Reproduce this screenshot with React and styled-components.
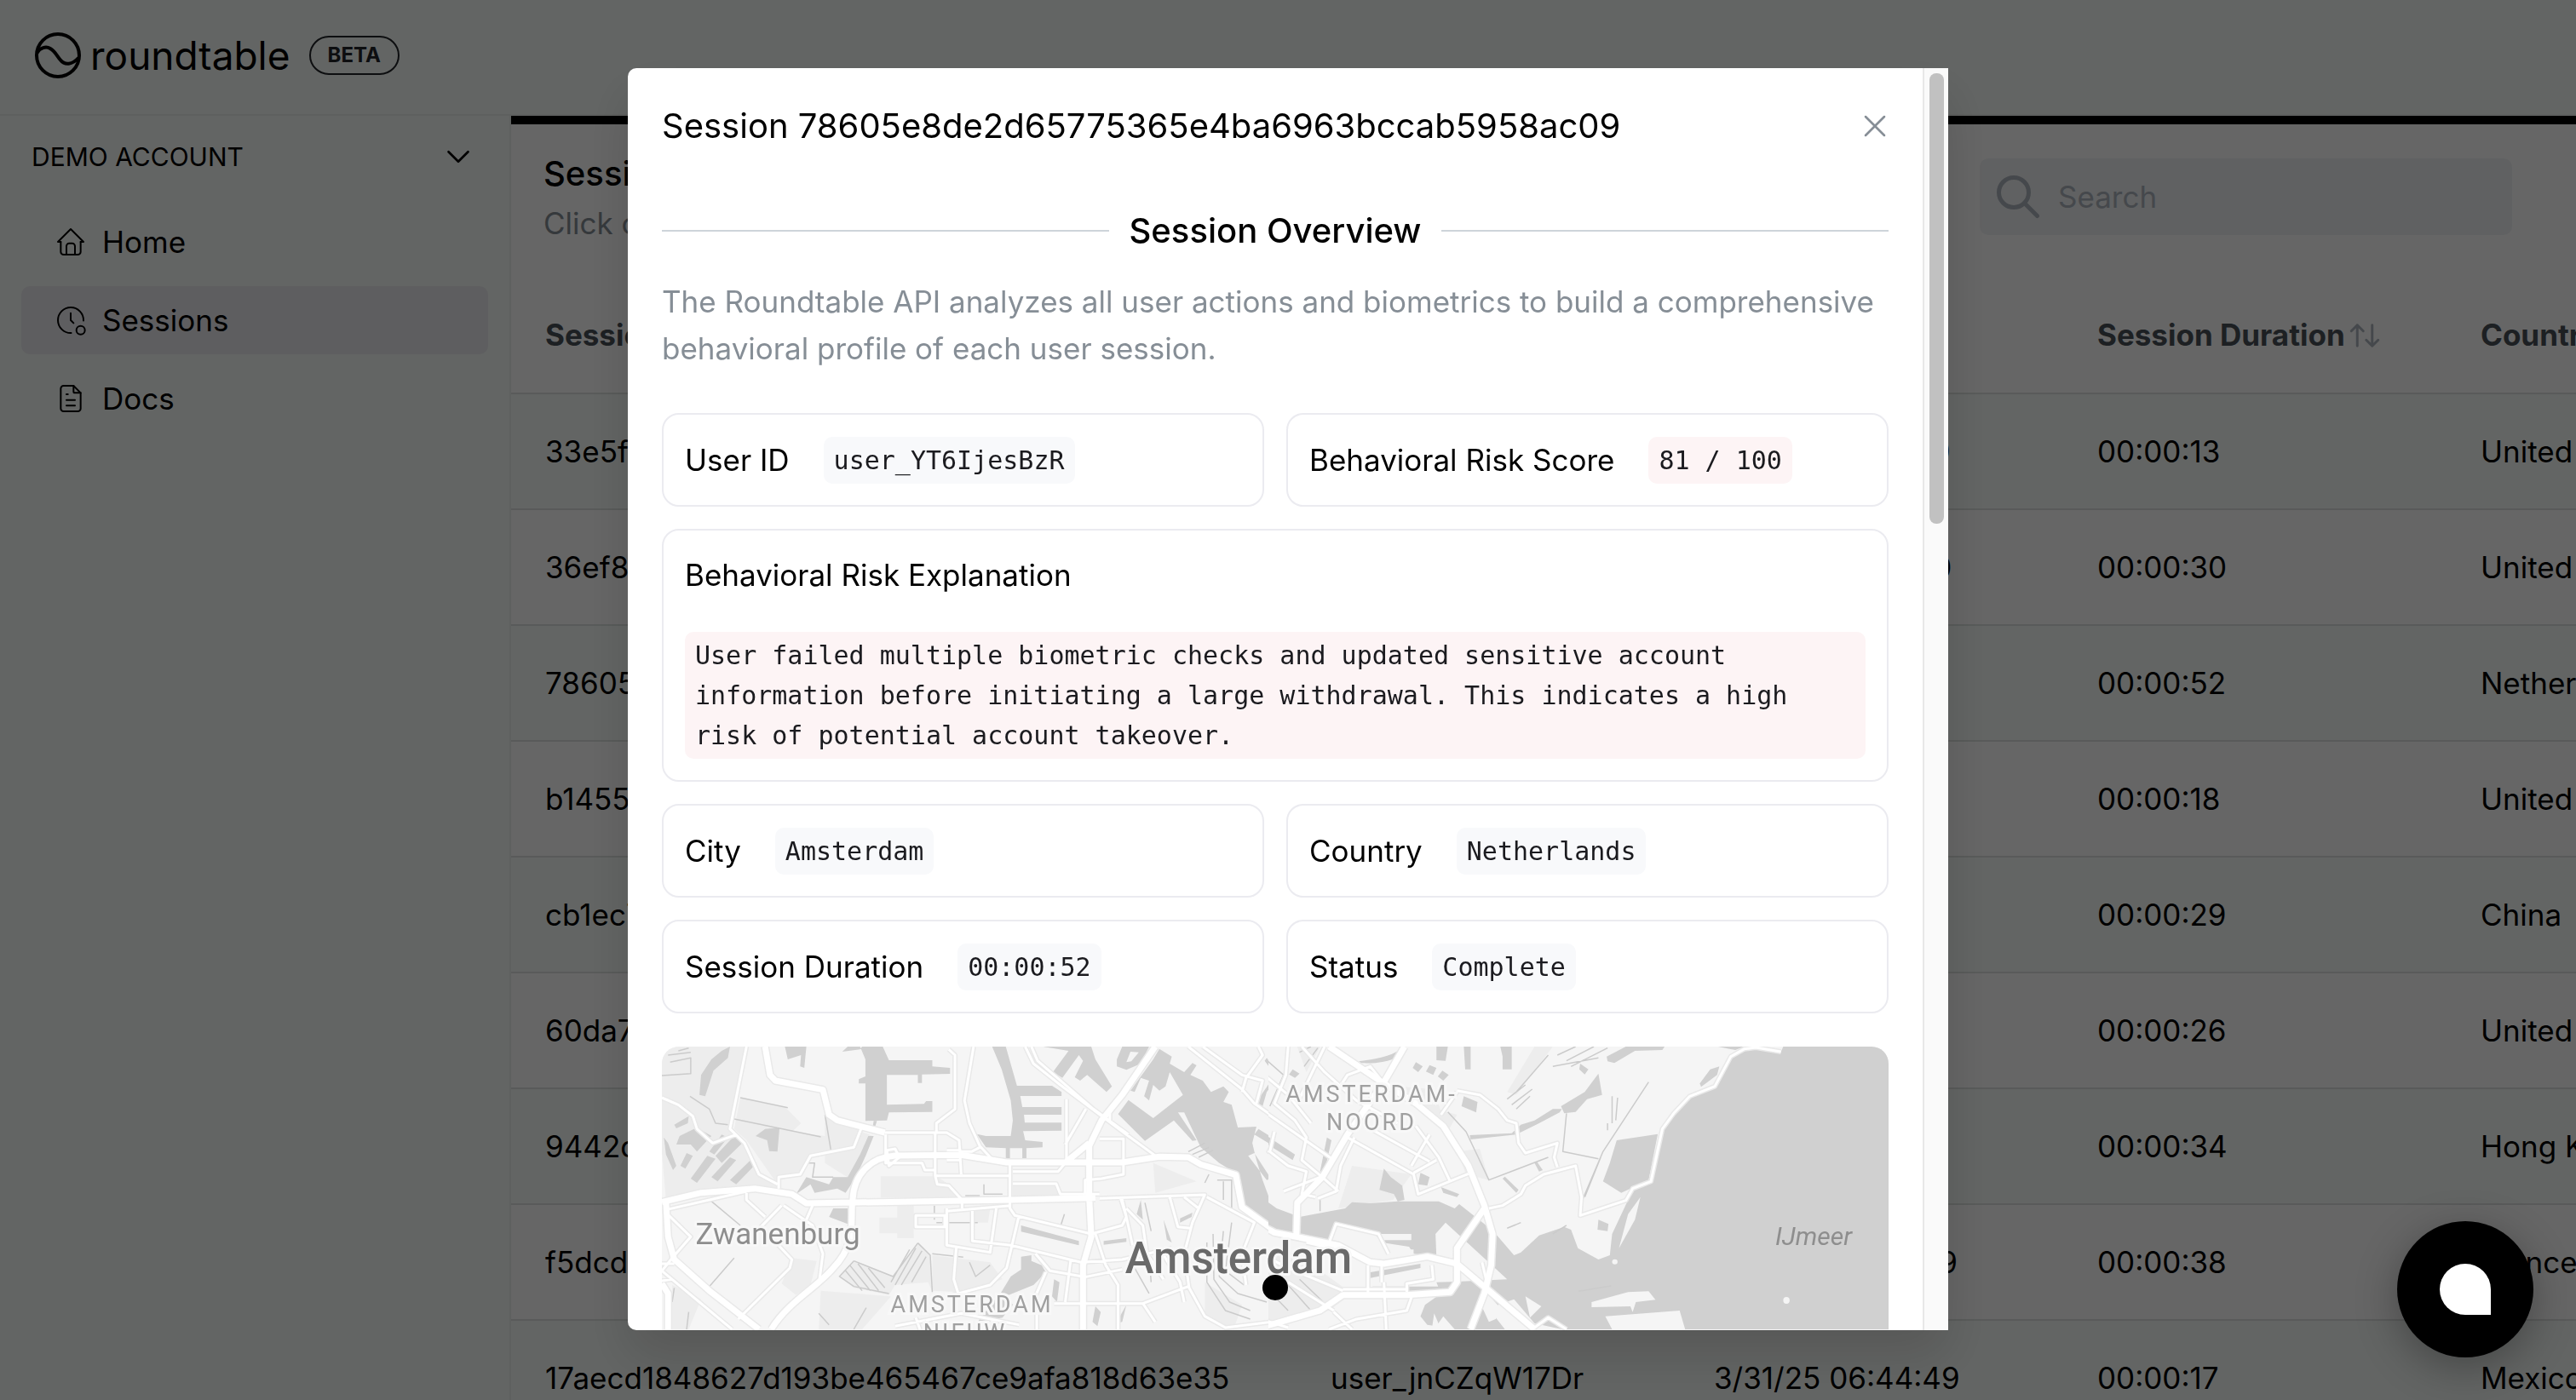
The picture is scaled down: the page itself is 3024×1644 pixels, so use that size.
import React from "react";
import styled, { createGlobalStyle, css } from "styled-components";
import {
  TbArrowsSort,
  TbChevronDown,
  TbClockRecord,
  TbFileText,
  TbHome,
  TbSearch,
  TbX,
} from "react-icons/tb";

const sessions = [
  ["33e5f0c7ab1d42e89c6bd0f7a35e21d94c8b70ae", "user_Qm4TzLwX8p", "3/31/25 06:51:59", "00:00:13", "United States"],
  ["36ef8a92d4c07b15e63f9a8b21dc470e5f96ab31", "user_b7RkVnE2Ys", "3/31/25 06:51:40", "00:00:30", "United Kingdom"],
  ["78605e8de2d65775365e4ba6963bccab5958ac09", "user_YT6IjesBzR", "3/31/25 06:51:11", "00:00:52", "Netherlands"],
  ["b1455c3e90fa7d26148be5c07f3a92d6e8140bc7", "user_h3WcPxU9Ld", "3/31/25 06:49:11", "00:00:18", "United States"],
  ["cb1ec7405d8ab396f21e70c4d95b83a6f07e2d14", "user_Kf5GmJtQ0a", "3/31/25 06:48:11", "00:00:29", "China"],
  ["60da7e1b4f93c82a5d06e7bc318f49a2d75c0be6", "user_r8NvSyH1Co", "3/31/25 06:47:11", "00:00:26", "United States"],
  ["9442d05bc7e81fa3692d4b0ce5a7f836d19b2e70", "user_Xw2DqZiM6u", "3/31/25 06:46:11", "00:00:34", "Hong Kong"],
  ["f5dcd8a16b03e97c42fd85ae70b1c6394e2da58f", "user_e9PbOgF4Tk", "3/31/25 06:45:29", "00:00:38", "France"],
  ["17aecd1848627d193be465467ce9afa818d63e35", "user_jnCZqW17Dr", "3/31/25 06:44:49", "00:00:17", "Mexico"],
];

const App = function () {
  return (
    <>
      <GlobalStyle />
      <Page>
        <TopBar>
          <Logo />
          <Wordmark>roundtable</Wordmark>
          <BetaBadge>BETA</BetaBadge>
        </TopBar>
        <Body>
          <Sidebar>
            <AccountButton type="button">
              DEMO ACCOUNT
              <TbChevronDown size={46} strokeWidth={1.4} />
            </AccountButton>
            <NavLink href="#home">
              <TbHome size={40} strokeWidth={1.2} />
              Home
            </NavLink>
            <NavLink href="#sessions" $active>
              <TbClockRecord size={40} strokeWidth={1.2} />
              Sessions
            </NavLink>
            <NavLink href="#docs">
              <TbFileText size={40} strokeWidth={1.2} />
              Docs
            </NavLink>
          </Sidebar>
          <Main>
            <MainHead>
              <div>
                <MainTitle>Sessions</MainTitle>
                <MainHint>Click on a session to see its details.</MainHint>
              </div>
              <SearchBox>
                <TbSearch size={60} />
                <SearchInput type="search" placeholder="Search" aria-label="Search" />
              </SearchBox>
            </MainHead>
            <SessionTable />
          </Main>
        </Body>
      </Page>
      <Overlay>
        <SessionModal />
      </Overlay>
      <ChatButton type="button" aria-label="Open chat">
        <ChatBubble />
      </ChatButton>
    </>
  );
};

export default App;

const SessionTable = function () {
  return (
    <TableWrapper>
      <Table>
        <colgroup>
          <Col $width={922} />
          <Col $width={450} />
          <Col $width={450} />
          <Col $width={450} />
          <Col $width={450} />
        </colgroup>
        <thead>
          <tr>
            <th>Session ID</th>
            <th>User ID</th>
            <th>Start Time</th>
            <th>
              <SortButton type="button">
                Session Duration
                <TbArrowsSort size={42} strokeWidth={1.7} />
              </SortButton>
            </th>
            <th>Country</th>
          </tr>
        </thead>
        <tbody>
          {sessions.map((row) => (
            <tr key={row[0]}>
              {row.map((cell) => (
                <td key={cell}>{cell}</td>
              ))}
            </tr>
          ))}
        </tbody>
      </Table>
    </TableWrapper>
  );
};

const SessionModal = function () {
  return (
    <Modal role="dialog" aria-modal="true" aria-labelledby="modal-title">
      <ModalContent>
        <ModalHeader>
          <ModalTitle id="modal-title">
            Session 78605e8de2d65775365e4ba6963bccab5958ac09
          </ModalTitle>
          <CloseButton type="button" aria-label="Close">
            <TbX size={44} strokeWidth={1.4} />
          </CloseButton>
        </ModalHeader>
        <SectionDivider>Session Overview</SectionDivider>
        <Intro>
          The Roundtable API analyzes all user actions and biometrics to build a
          comprehensive behavioral profile of each user session.
        </Intro>
        <CardGrid>
          <Field label="User ID" value="user_YT6IjesBzR" />
          <Field label="Behavioral Risk Score" value="81 / 100" risk />
          <WideCard>
            Behavioral Risk Explanation
            <Code $risk>
              User failed multiple biometric checks and updated sensitive
              account information before initiating a large withdrawal. This
              indicates a high risk of potential account takeover.
            </Code>
          </WideCard>
          <Field label="City" value="Amsterdam" />
          <Field label="Country" value="Netherlands" />
          <Field label="Session Duration" value="00:00:52" />
          <Field label="Status" value="Complete" />
        </CardGrid>
        <CityMap />
      </ModalContent>
      <ScrollTrack>
        <ScrollThumb />
      </ScrollTrack>
    </Modal>
  );
};

const Field = function ({ label, value, risk }) {
  return (
    <Card>
      {label}
      <Code $risk={risk}>{value}</Code>
    </Card>
  );
};

const Logo = function () {
  return (
    <svg width="56" height="56" viewBox="0 0 56 56" fill="none" stroke="#000" strokeWidth="4">
      <circle cx="28" cy="28" r="25" />
      <path d="M3.500 25C7 19 14 17 19 20C25 23.500 27 29 31 33.500C36 40 45 39 52 31" />
    </svg>
  );
};

const westWater = [
  "M515,30 570,30 585,78 690,78 690,100 733,105 733,126 665,128 665,158 655,158 655,130 580,130 580,235 670,232 675,222 690,222 690,260 585,262 580,290 528,292 528,160 512,160 512,145 528,135 528,75Z",
  "M548,292 556,292 552,310 546,310Z",
  "M333,30 385,30 380,105 370,100 372,60 340,75Z",
  "M472,48 485,30 520,30 515,40Z",
  "M835,30 868,30 895,168 980,168 1003,190 1003,204 903,204 908,243 1003,243 1003,270 912,270 914,298 1003,298 1003,326 910,328 915,360 957,366 957,385 918,388 918,425 908,425 908,388 878,388 878,425 868,425 868,388 820,385 798,338 820,345 880,345 885,290 880,220 858,110Z",
  "M958,30 1075,30 1085,75 1125,170 1112,190 1065,130 1048,150 1035,138 1055,80 1045,60 1005,140 982,120 1020,45Z",
  "M1150,30 1215,30 1195,90 1160,112 1137,100 1137,75ZM1170,48 1160,85 1172,82 1190,50Z",
  "M1240,38 1270,65 1265,90 1300,120 1320,88 1330,96 1315,130 1345,150 1365,190 1395,170 1408,190 1395,225 1415,235 1430,315 1475,312 1465,370 1475,430 1490,500 1515,600 1550,585 1568,600 1568,685 1520,675 1445,595 1430,480 1385,440 1340,385 1300,262 1285,262 1312,320 1330,360 1320,362 1275,290 1205,362 1140,268 1165,218 1225,282 1297,200 1265,120 1255,170 1240,185 1225,165 1215,220 1203,205 1215,150 1195,140 1180,190 1170,185 1225,75Z",
  "M100,275 65,305 70,318 98,300ZM120,315 78,345 70,375 105,375 120,400 155,345ZM180,340 150,400 162,410 195,350ZM210,345 165,415 180,440 230,370ZM40,350 50,370 70,450 62,465 45,410ZM95,405 80,450 92,460 110,415ZM145,415 105,495 120,510 165,425ZM200,420 155,490 170,505 215,430ZM250,430 200,500 215,515 265,440Z",
  "M285,320 320,315 315,400 295,398 290,360 262,345Z",
  "M200,30 195,70 160,115 140,205 126,200 130,130 155,75 180,45Z",
  "M535,345 548,345 530,410 505,490 480,545 460,530 405,545 395,515 360,550 385,490 440,515 450,490 485,490 515,410Z",
  "M450,600 485,600 485,655 440,630Z",
  "M905,770 930,765 930,785 955,800 965,825 935,870 875,905 855,900 880,840 905,815Z",
  "M845,915 870,905 885,940 860,985 800,1000Z",
  "M905,660 1045,715 1045,730 905,682ZM1105,715 1160,705 1160,718 1105,728ZM1250,640 1270,720 1258,710ZM1195,570 1185,620 1200,640ZM1290,635 1320,615 1318,630 1290,650Z",
  "M1085,945 1098,965 1090,1015 1078,1000ZM985,850 998,860 992,930 980,910ZM1135,1005 1160,940 1150,1000Z",
  "M1500,70 1530,130 1500,190 1490,240 1475,225 1520,130 1495,80ZM1480,320 1568,400 1568,425 1470,340ZM1470,405 1510,495 1500,500 1455,415Z",
];

const westParks = [
  "M35,30 240,30 200,320 235,370 270,480 320,530 260,525 45,570 35,400Z",
  "M225,210 335,245 372,300 350,330 430,345 500,330 505,385 395,410 375,480 310,505 240,360 210,320Z",
  "M430,260 520,330 545,345 495,500 430,440Z",
  "M565,487 700,487 745,530 760,560 565,562ZM885,518 990,518 995,560 885,562ZM605,590 645,590 645,705 605,705ZM562,632 605,632 605,688 562,688Z",
  "M350,775 410,785 395,870 360,905 325,865ZM690,765 830,790 860,850 760,895 690,890ZM1225,440 1330,505 1230,545ZM785,600 830,600 825,650 790,650Z",
  "M655,722 685,765 690,895 680,860 600,870 585,905 500,880 465,840 500,785 595,840Z",
  "M60,870 130,920 100,1026 60,1026ZM420,890 590,910 520,1026 415,1026ZM1350,860 1440,940 1420,1026 1350,990Z",
];

const westMinor =
  "M240,30 L200,320 235,370 270,480 315,515 M35,210 75,235 110,275 120,320 158,370 215,340 M575,333 H725 L755,360 760,480 M697,330 V485 L702,515 730,520 762,570 V600 M730,40 745,60 V250 L700,300 V330 M790,30 768,220 780,300 805,380 840,435 M755,400 785,400 805,385 M915,30 935,90 1000,165 1160,340 1240,425 M930,30 945,80 1080,250 1165,340 M1015,215 V430 M1062,250 1012,375 M878,440 V600 L890,625 1075,690 1150,660 1160,630 1148,560 M577,340 V440 H665 L672,465 H697 M700,485 H880 M885,470 H995 L1012,440 M885,513 H990 L1000,550 H1095 M1095,355 H1153 V480 L1100,495 1060,500 V550 M1120,260 V300 M45,605 240,540 M318,530 V490 L370,480 395,415 500,385 520,310 M725,610 880,590 M650,625 H720 V665 H650Z M725,600 V730 L830,755 845,600 M787,600 V715 L880,730 1050,790 1150,780 1270,740 M900,625 870,810 830,870 740,905 M748,740 742,850 755,910 M940,760 975,820 1060,842 1150,815 M1085,690 1110,800 1140,870 V1026 M1025,785 1012,930 M965,825 935,925 M985,935 H1200 L1310,875 M1095,565 1350,552 1320,650 1300,760 1312,880 1350,980 1400,1020 1568,990 M1265,560 1285,665 1315,670 M1300,560 1335,600 M1355,560 1470,650 1440,760 1450,870 M1160,600 1200,660 1210,760 1250,850 M1200,935 1230,1000 M1240,740 1290,860 1300,930 M1145,560 1160,630 1175,730 M943,930 V1026 M650,985 660,1026 M600,1015 760,970 900,1010 M45,615 105,700 60,775 35,820 205,1026 M35,795 H65 M35,855 60,850 M330,590 400,660 425,760 415,870 M400,590 385,640 M240,545 240,570 285,630 M325,590 275,665 350,780 345,810 220,990 M1310,30 1440,180 1470,230 1568,330 M1480,30 1490,60 1450,140 1440,190 M1345,30 1440,130 1490,150 1475,230 M1540,300 1505,400 1568,460 M1525,440 1540,540 M725,395 H760 M725,430 H755 M580,395 600,390 610,420 585,450 Z";

const westMajor =
  "M35,578 L130,545 260,530 350,550 385,582 560,578 880,570 1085,563 M285,30 297,130 310,150 425,182 440,270 460,290 575,333 M300,1026 C340,930 410,880 450,810 C510,720 490,640 497,570 C500,480 540,420 600,414 L760,412 870,438 H1150 L1240,418 1310,420 1340,445 1425,482 1440,595 1520,680 1568,697 M1230,30 1150,200 1100,290 1070,380 1070,560 1075,700 1055,800 V1026 M1015,435 1070,370 M45,575 50,700 65,780 150,890 270,1026 M35,865 50,900 V1026";

const westThin =
  "M75,45 100,35 M50,60 105,50 M55,85 105,70 V125 L35,132 M103,205 150,250 165,300 195,305 M225,210 340,245 M210,285 420,348 M430,270 445,400 M385,440 H405 L400,490 H450 M815,515 V550 H860 M770,555 H805 M150,875 210,775 M155,575 225,660 M690,760 765,772 M780,790 795,840 830,800 M1355,720 V860 L1400,960 1460,990 M1370,690 1372,850 1410,930 1460,960 M1395,680 1385,840 1430,900 1500,930 M1415,650 1400,820 1445,870 M1010,620 1000,665 M700,650 H800 M695,590 V640 M1205,580 1220,680 M1215,770 1220,860 M1180,810 1215,900 M1360,480 1350,510 M1380,500 H1415 V600 M1395,505 V570 M1310,400 1350,370 M1320,410 1360,385 M1335,420 1370,395 M100,965 95,1026 M65,880 60,930 M530,950 500,1026 M415,970 440,1010 M500,785 465,840 500,875 585,900 M655,722 595,840 500,785 M655,722 685,765 690,895 M480,820 520,890 M490,800 540,890 M510,795 560,890 M535,810 575,880 M635,745 590,860 M650,740 600,870 M665,750 615,870 M675,770 640,860";

const eastWater = [
  "M1145,30H1376V1026H930L918,960 755,980 770,1026H660L600,1005 555,920 520,940 515,985 535,1026H425L400,980 385,1015 365,1010 350,980 360,940 395,900 385,860 430,858 540,850 405,650 383,690 385,770 335,760 325,735 265,720 250,690 165,655 150,720 85,690 30,685 0,650V560L35,600 85,630 185,600 200,578 240,582 300,575 390,575 425,600 435,585 490,655 515,690 555,765 570,755 610,695 665,665 680,675 695,740 740,780 765,765 770,690 805,570 815,530 855,505 880,320 905,265 940,205 995,170 1030,65 1060,38 1085,33 1140,48Z",
  "M780,360 870,338 850,500 790,545 750,505 765,440Z",
  "M740,125 748,200 715,215 690,260 665,265 658,240 710,190Z",
  "M758,65 800,30 885,30 880,42 820,45 775,88 760,82Z",
  "M1002,30H1060L1040,42ZM1005,100 1000,130 965,172 962,160 985,110Z",
  "M240,825 350,795 350,810 240,845ZM245,875H400V893H245Z",
  "M385,30H410L405,80 385,78ZM340,85 355,100 345,120 333,105ZM370,95 385,105 378,130 362,118ZM398,115 412,130 400,150 388,135Z",
  "M445,205 475,225 472,262 440,240ZM700,90 718,110 710,128 698,110ZM740,640 762,655 760,680 738,675ZM525,30H550V110H530V65ZM445,30H460V110H448Z",
  "M270,460 285,490 310,520 315,570 300,575 292,550 260,535ZM350,475 370,490 365,520 345,515ZM395,525 435,550 430,560 400,545ZM145,350 155,360 140,470 130,470Z",
  "M0,330 75,410 70,430 0,360ZM215,82C250,75 285,65 305,40L300,65C280,85 250,90 220,88ZM70,110 85,125 75,140 62,128Z",
  "M458,342 550,335 570,305 600,290 640,250 660,250 655,262 610,300 560,340 460,357ZM605,435 618,465 610,470 600,440ZM535,488 565,535 560,545 530,495Z",
];

const eastLand = [
  "M260,690H330V712H268ZM275,745H335V765H275ZM485,880 525,950 515,990 500,1000 480,930Z",
  "M580,910 615,945 590,985ZM725,930 805,895 850,892 865,922 822,930 815,965 810,945 725,948Z",
  "M832,560 820,640 785,740 805,620ZM770,788a6,9 0 1 0 12,0a6,9 0 1 0 -12,0M1145,924a7,12 0 1 0 14,0a7,12 0 1 0 -14,0",
  "M380,970 395,1026H375Z",
];

const eastMinor =
  "M430,185 L480,200 520,250 540,290 560,300 565,370 580,405 650,370 643,420 650,455 M500,600 530,590 570,550 580,520 620,480 690,450 703,560 700,625 800,572 815,530 855,505 880,320 905,265 940,205 995,170 1030,65 1060,38 1085,33 1140,48 M190,350 335,480 345,550 455,478 M230,310 370,435 M340,310 390,420 415,505 M335,475 385,430 M370,340 330,450 M60,30 55,130 30,230 75,290 100,350 90,430 135,490 170,540 M0,250 80,340 160,430 M90,30 140,120 210,220 300,300 M140,30 80,230 M0,120 60,200 110,300 M270,160 240,100 190,130 170,180 M30,330 20,400 60,450 100,470 90,550 120,560 M130,490 50,540 M205,350 175,450 165,540 125,565 M395,270 430,190 M0,760 60,810 180,890 M235,800V900 M265,790V860 M180,885H320 M270,860 275,1026 M160,965 200,1026 M60,860 160,960 M0,990 60,1020 M320,900 330,915 320,960 210,990 150,1026 M375,800 378,850 320,865V895 M150,720 165,655 258,690 280,760 M600,1020 630,985 670,1026 M485,790 500,890 M100,720 210,760";

const eastMajor =
  "M150,30 L270,160 340,230 400,310 455,450 490,590 508,690 505,800 490,900 460,1026 M315,30 270,155 190,340 135,490 80,580 78,700 M0,660 30,685 170,730 240,790 270,795 365,770 430,795 500,890 600,1026 M0,1020 130,960 180,905 320,905 415,895 430,860V740L490,600";

const eastThin =
  "M850,155 L750,400 705,570 M410,260 450,330 500,500 630,420 M670,265 662,400 740,425 M745,420 710,560 M630,60 560,190 M650,60 690,30 M670,80 730,30 M680,100 760,35 M640,100 740,70 M540,215 580,165 M550,235 595,180 M560,250 590,205 M770,205V300 M782,210 778,290 M760,300V325 M540,670 570,650 M697,892 768,873 M0,60 50,130 20,240 M85,50 110,30 M95,100 125,35 M60,870 110,960 M85,850 150,950 M130,560 V610 M0,860 60,960 M640,690 670,660";

const MapRoads = function ({ minor, major, thin }) {
  return (
    <>
      <MapLine $color="#cbcbcb" $width={1.5} d={thin} />
      <MapLine $color="#e9e9e9" $width={6} d={minor} />
      <MapLine $color="#e9e9e9" $width={10} d={major} />
      <MapLine $color="#fff" $width={3} d={minor} />
      <MapLine $color="#fff" $width={7} d={major} />
    </>
  );
};

const CityMap = function () {
  return (
    <MapFrame>
      <svg width="100%" height="566" viewBox="0 0 1440 566" preserveAspectRatio="xMidYMid slice">
        <defs>
          <clipPath id="west-half">
            <rect x="0" y="0" width="712" height="566" />
          </clipPath>
          <clipPath id="east-half">
            <rect x="712" y="0" width="728" height="566" />
          </clipPath>
        </defs>
        <g clipPath="url(#west-half)">
          <g transform="translate(-17 -10) scale(0.4847 0.3333)">
            <path d={westParks.join("")} fill="#ededed" />
            <path d={westWater.join("")} fill="#d0d0d0" fillRule="evenodd" />
            <MapRoads minor={westMinor} major={westMajor} thin={westThin} />
          </g>
        </g>
        <g clipPath="url(#east-half)">
          <g transform="translate(703 -10) scale(0.5357 0.3333)">
            <path
              d="M200,450 330,480 290,570 170,600ZM340,230 430,270 410,330ZM600,30 640,30 560,200 540,190ZM80,30 130,30 100,120ZM430,400 480,390 500,500 450,480ZM0,740 80,760 200,900 150,960 0,1020ZM300,170 380,180 395,260 330,230Z"
              fill="#ededed"
            />
            <path d={eastWater.join("")} fill="#d0d0d0" />
            <path d={eastLand.join("")} fill="#f5f5f5" />
            <MapRoads minor={eastMinor} major={eastMajor} thin={eastThin} />
          </g>
        </g>
        <MapLabel x="136" y="232" $size={35} $color="#8e8e8e" textAnchor="middle">Zwanenburg</MapLabel>
        <DistrictLabel x="833" y="65">AMSTERDAM-</DistrictLabel>
        <DistrictLabel x="833" y="98">NOORD</DistrictLabel>
        <DistrictLabel x="364" y="312">AMSTERDAM</DistrictLabel>
        <DistrictLabel x="356" y="345">NIEUW</DistrictLabel>
        <MapLabel x="677" y="266" $size={51} $color="#6a6a6a" $weight={500} textAnchor="middle">Amsterdam</MapLabel>
        <WaterLabel x="1352" y="233">IJmeer</WaterLabel>
        <circle cx="720" cy="283" r="15" fill="#000" />
      </svg>
    </MapFrame>
  );
};

const GlobalStyle = createGlobalStyle`
  * {
    box-sizing: border-box;
  }
  body {
    margin: 0;
    overflow: hidden;
    color: #000;
    background: #f8fcf9;
    font-family: Inter, "Liberation Sans", sans-serif;
    font-size: 35px;
    line-height: 55px;
  }
  button,
  input {
    font: inherit;
    color: inherit;
    border: none;
    padding: 0;
    background: none;
    cursor: pointer;
  }
  h1, h2, p {
    margin: 0;
  }
  svg {
    display: block;
    flex-shrink: 0;
  }
`;

const Page = styled.div`
  display: flex;
  flex-direction: column;
  height: 100vh;
  overflow: hidden;
`;

const TopBar = styled.header`
  display: flex;
  align-items: center;
  padding: 37px 40px 41px;
  border-bottom: 2px solid #ecf0ed;
`;

const Wordmark = styled.span`
  font-size: 46px;
  line-height: 56px;
  margin-left: 10px;
`;

const BetaBadge = styled.span`
  border: 2px solid #212529;
  border-radius: 24px;
  color: #212529;
  font-size: 24px;
  font-weight: 700;
  line-height: 42px;
  margin-left: 22px;
  padding: 0 20px;
`;

const Body = styled.div`
  display: flex;
  flex: 1;
  min-height: 0;
`;

const Sidebar = styled.nav`
  border-right: 2px solid #ecf0ed;
  display: flex;
  flex-direction: column;
  flex-shrink: 0;
  gap: 12px;
  padding: 0 25px;
  width: 600px;
`;

const AccountButton = styled.button`
  align-items: center;
  display: flex;
  font-size: 30px;
  height: 96px;
  justify-content: space-between;
  padding: 0 12px;
`;

const NavLink = styled.a`
  align-items: center;
  border-radius: 10px;
  color: #000;
  display: flex;
  gap: 17px;
  height: 80px;
  padding: 0 38px;
  text-decoration: none;
  ${(props) =>
    props.$active &&
    css`
      background: #ebebf0;
    `}
`;

const Main = styled.main`
  background: #fff;
  border-top: 10px solid #000;
  flex: 1;
  min-width: 0;
`;

const MainHead = styled.div`
  align-items: flex-start;
  display: flex;
  height: 180px;
  justify-content: space-between;
  padding: 30px 75px 0 38px;
`;

const MainTitle = styled.h1`
  font-size: 40px;
  font-weight: 500;
  line-height: 56px;
`;

const MainHint = styled.p`
  color: #868e96;
  margin-top: 3px;
`;

const SearchBox = styled.label`
  align-items: center;
  background: #f1f3f5;
  border-radius: 10px;
  color: #adb5bd;
  display: flex;
  gap: 17px;
  height: 90px;
  margin-top: 10px;
  padding: 0 15px;
  width: 625px;
`;

const SearchInput = styled.input`
  flex: 1;
  min-width: 0;
  outline: none;
  &::placeholder {
    color: #adb5bd;
    opacity: 1;
  }
`;

const TableWrapper = styled.div`
  overflow: hidden;
`;

const Table = styled.table`
  border-collapse: collapse;
  table-layout: fixed;
  text-align: left;
  white-space: nowrap;
  width: 2722px;
  th,
  td {
    border-bottom: 2px solid #dee2e0;
    height: 136px;
    padding: 0 40px;
  }
  th {
    color: #495057;
    font-weight: 700;
  }
  tbody tr:nth-child(odd) {
    background: #f8fcf9;
  }
`;

const Col = styled.col`
  width: ${(props) => props.$width}px;
`;

const SortButton = styled.button`
  align-items: center;
  display: flex;
  font-weight: 700;
  gap: 2px;
  svg {
    color: #adb5bd;
  }
`;

const Overlay = styled.div`
  background: rgba(0, 0, 0, 0.6);
  display: flex;
  inset: 0;
  justify-content: center;
  padding: 80px 0 82px;
  position: fixed;
`;

const Modal = styled.section`
  background: #fff;
  border-radius: 10px 0 0 10px;
  box-shadow: 0 30px 60px rgba(0, 0, 0, 0.14);
  display: flex;
  max-width: 1550px;
  overflow: hidden;
  width: 90%;
`;

const ModalContent = styled.div`
  flex: 1;
  min-width: 0;
  overflow-y: auto;
  padding: 40px;
  scrollbar-width: none;
`;

const ScrollTrack = styled.div`
  background: #fafafa;
  border-left: 2px solid #e8e8e8;
  padding: 6px 5px 6px 6px;
  width: 30px;
`;

const ScrollThumb = styled.div`
  background: #c1c1c1;
  border-radius: 8px;
  height: 36%;
`;

const ModalHeader = styled.header`
  align-items: center;
  display: flex;
  justify-content: space-between;
  margin-bottom: 67px;
`;

const ModalTitle = styled.h2`
  font-size: 40px;
  font-weight: 400;
  line-height: 56px;
`;

const CloseButton = styled.button`
  color: #868e96;
  margin-right: -6px;
`;

const SectionDivider = styled.h2`
  align-items: center;
  display: flex;
  font-size: 40px;
  font-weight: 500;
  gap: 24px;
  line-height: 56px;
  &::before,
  &::after {
    border-top: 2px solid #ced4da;
    content: "";
    flex: 1;
  }
`;

const Intro = styled.p`
  color: #868e96;
  margin: 28px 0 48px;
`;

const CardGrid = styled.div`
  display: grid;
  gap: 26px;
  grid-template-columns: 1fr 1fr;
`;

const Card = styled.div`
  align-items: center;
  border: 2px solid #ebebf0;
  border-radius: 20px;
  display: flex;
  gap: 40px;
  min-height: 110px;
  padding: 25px;
`;

const WideCard = styled(Card)`
  align-items: stretch;
  flex-direction: column;
  gap: 39px;
  grid-column: 1 / -1;
`;

const Code = styled.code`
  background: ${(props) => (props.$risk ? "#fdf4f5" : "#f8f9fb")};
  border-radius: 10px;
  color: #1b1b1f;
  font-family: "DejaVu Sans Mono", monospace;
  font-size: 30px;
  line-height: 47px;
  padding: 4px 12px;
`;

const MapFrame = styled.div`
  background: #f5f5f5;
  border-radius: 20px;
  margin-top: 39px;
  overflow: hidden;
`;

const MapLine = styled.path`
  fill: none;
  stroke: ${(props) => props.$color};
  stroke-linejoin: round;
  stroke-width: ${(props) => props.$width};
  vector-effect: non-scaling-stroke;
`;

const MapLabel = styled.text`
  fill: ${(props) => props.$color};
  font-family: Roboto, sans-serif;
  font-size: ${(props) => props.$size}px;
  font-weight: ${(props) => props.$weight || 400};
  paint-order: stroke;
  stroke: #f8f8f8;
  stroke-linejoin: round;
  stroke-width: 6;
`;

const DistrictLabel = styled.text`
  fill: #a0a0a0;
  font-family: Roboto, sans-serif;
  font-size: 27px;
  letter-spacing: 3px;
  paint-order: stroke;
  stroke: #f8f8f8;
  stroke-width: 6;
  text-anchor: middle;
`;

const WaterLabel = styled.text`
  fill: #8e8e8e;
  font-family: Roboto, sans-serif;
  font-size: 30px;
  font-style: italic;
  text-anchor: middle;
`;

const ChatButton = styled.button`
  align-items: center;
  background: #000;
  border-radius: 50%;
  bottom: 50px;
  box-shadow: 0 12px 50px rgba(0, 0, 0, 0.3);
  display: flex;
  height: 160px;
  justify-content: center;
  position: fixed;
  right: 50px;
  width: 160px;
`;

const ChatBubble = styled.span`
  background: #fff;
  border-radius: 50% 50% 0 50%;
  height: 60px;
  width: 60px;
`;
